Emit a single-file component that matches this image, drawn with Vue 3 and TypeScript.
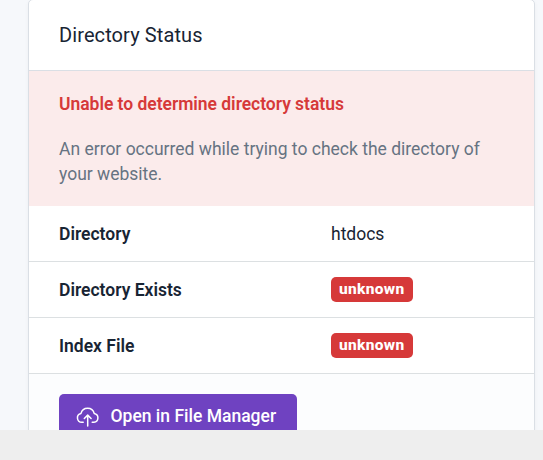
<script setup lang="ts">
interface StatusRow {
  label: string
  value: string
  badge: boolean
}

const rows: StatusRow[] = [
  { label: 'Directory', value: 'htdocs', badge: false },
  { label: 'Directory Exists', value: 'unknown', badge: true },
  { label: 'Index File', value: 'unknown', badge: true },
]
</script>

<template>
  <main class="page">
    <section class="viewport">
      <article class="card">
        <header class="card-header">
          <h3 class="title">Directory Status</h3>
        </header>
        <div class="notice">
          <strong class="notice-title">Unable to determine directory status</strong>
          <p class="notice-text">An error occurred while trying to check the directory of your website.</p>
        </div>
        <dl class="rows">
          <div v-for="row in rows" :key="row.label" class="row">
            <dt class="label">{{ row.label }}</dt>
            <dd class="value">
              <span v-if="row.badge" class="badge">{{ row.value }}</span>
              <span v-else class="plain">{{ row.value }}</span>
            </dd>
          </div>
        </dl>
        <footer class="card-footer">
          <button class="button" type="button">
            <svg class="icon" viewBox="0 0 25 25" aria-hidden="true">
              <path d="M8.2 18.3H6.9A4.5 4.5 0 0 1 6 9.4 6.8 6.8 0 0 1 19.2 9.4 4.5 4.5 0 0 1 18.9 18.3H17.2M12.7 22V11.3M9.3 14.5l3.4-3.4 3.4 3.4" />
            </svg>
            <span>Open in File Manager</span>
          </button>
        </footer>
      </article>
    </section>
  </main>
</template>

<style>
body {
  margin: 0;
  background: #eeeeee;
}
</style>

<style scoped>
.page {
  height: 460px;
  overflow: hidden;
  font-family: Roboto, "Liberation Sans", sans-serif;
  font-size: 17.5px;
  line-height: 25px;
  color: #182433;
}
.viewport {
  box-sizing: border-box;
  height: 430px;
  padding: 0 8px 0 28px;
  overflow: hidden;
  background: #f6f8fb;
}
.card {
  box-sizing: border-box;
  height: 460px;
  margin-top: -1px;
  border: 1px solid #dadfe5;
  border-radius: 5px;
  background: #ffffff;
  box-shadow: 0 2px 5px rgba(24, 36, 51, 0.04);
}
.card-header {
  box-sizing: border-box;
  display: flex;
  align-items: center;
  height: 71px;
  padding: 0 30px;
  border-bottom: 1px solid #dadfe5;
}
.title {
  margin: 0;
  font-size: 20px;
  font-weight: 400;
  letter-spacing: 0.1px;
  line-height: 30px;
}
.notice {
  box-sizing: border-box;
  height: 135px;
  padding: 21px 30px 19px;
  background: #fbebeb;
}
.notice-title {
  display: block;
  margin-bottom: 20px;
  font-weight: 600;
  letter-spacing: -0.03px;
  color: #d63939;
}
.notice-text {
  margin: 0;
  color: #667382;
}
.rows {
  margin: 0;
}
.row {
  box-sizing: border-box;
  display: grid;
  grid-template-columns: 272px 1fr;
  align-items: center;
  height: 56px;
  padding: 0 30px;
  border-bottom: 1px solid #dce0e2;
}
.label {
  padding-top: 2px;
  font-weight: 600;
}
.value {
  display: flex;
  margin: 0;
}
.plain {
  padding-top: 2px;
}
.badge {
  box-sizing: border-box;
  width: 82px;
  height: 25px;
  padding: 0 8px;
  border-radius: 5px;
  background: #d63939;
  color: #ffffff;
  font-size: 15.5px;
  font-weight: 800;
  letter-spacing: 0.3px;
}
.card-footer {
  height: 84px;
  box-sizing: border-box;
  padding: 20px 30px;
  background: #fcfdfe;
}
.button {
  box-sizing: border-box;
  display: flex;
  align-items: center;
  width: 238px;
  height: 45px;
  padding: 0 16px;
  gap: 10.5px;
  border: 0;
  border-radius: 5px;
  background: #6f42c1;
  color: #ffffff;
  font: inherit;
  font-weight: 500;
  white-space: nowrap;
}
.icon {
  width: 25px;
  height: 25px;
  fill: none;
  stroke: currentColor;
  stroke-width: 1.5;
  stroke-linecap: round;
  stroke-linejoin: round;
}
</style>
